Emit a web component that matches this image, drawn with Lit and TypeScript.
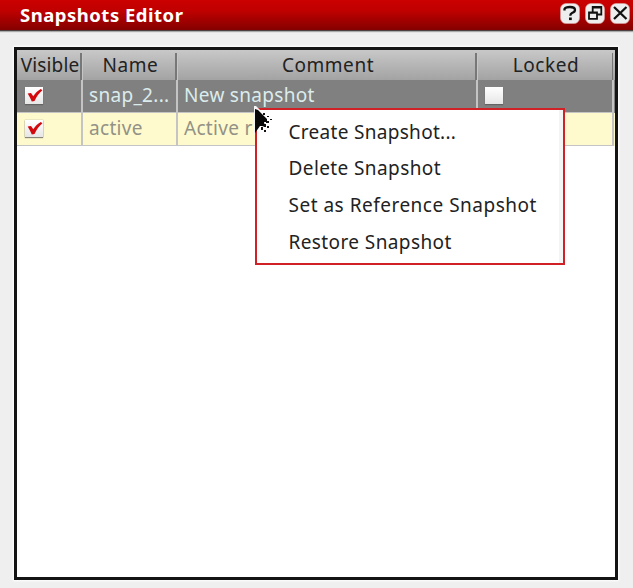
import { LitElement, html, css, svg } from "lit";
import { customElement, property } from "lit/decorators.js";

@customElement("check-box")
class CheckBox extends LitElement {
  @property({ type: Boolean }) checked = false;
  static styles = css`
    :host { display: block; width: 18px; height: 18px; }
    .box { width: 18px; height: 17px; background: linear-gradient(#fff, #e6e6e6); box-shadow: 0 1px 1px #555555aa, 0 0 1px #888; }
    svg { display: block; overflow: visible; }
  `;
  render() {
    return html`<div class="box">
      <svg width="18" height="17" viewBox="0 0 18 17">
        ${this.checked
          ? svg`<path d="M2.7 6.4 L6 5.9 L8.3 9.2 C10.4 6.1 12.6 3.8 15.8 2 L17.4 3.3 C13.6 6.4 11.5 9.8 9.5 14 L6.8 14.6 C5.6 11.7 4.4 9 2.7 6.4Z" fill="#d3080d"/>`
          : null}
      </svg>
    </div>`;
  }
}

interface Snapshot { name: string; comment: string; selected: boolean; }

@customElement("app-root")
class AppRoot extends LitElement {
  static styles = css`
    :host {
      display: flex; flex-direction: column; position: relative; box-sizing: border-box;
      width: 633px; height: 588px; background: #efefef; overflow: hidden;
      font-family: "Noto Sans", sans-serif; font-size: 19px; color: #222; white-space: nowrap;
    }
    .titlebar {
      box-sizing: border-box; height: 31px; flex: none; display: flex; align-items: center;
      padding: 0 3px 0 20px; color: #fff; font-weight: 700; font-size: 18.5px;
      background: linear-gradient(#cb0000, #c00000 35%, #850000);
      border-bottom: 1px solid #4c4141; box-shadow: 0 1px 1px #aaa;
    }
    .title { flex: 1; letter-spacing: 0.5px; line-height: 30px; }
    .buttons { display: flex; gap: 5px; margin-top: -3px; }
    .buttons svg { display: block; }
    .frame {
      margin: 16px 15px 8px 14px; flex: 1; box-sizing: border-box;
      border: 3px solid #141414; background: #fff; box-shadow: 0 0 2px 1px #fff;
    }
    .row { display: grid; grid-template-columns: 66px 95px 300px 136px; }
    .head { height: 30px; background: linear-gradient(#c8c8c8, #a3a3a3); }
    .head .cell {
      margin-top: 3px; line-height: 25px; text-align: center; letter-spacing: 0.55px;
      background: linear-gradient(90deg, #777 1.5px, #c6c6c6 1.5px) right / 3px 100% no-repeat;
    }
    .head .cell:first-child { letter-spacing: 0.15px; }
    .head .cell:last-child { background: linear-gradient(#777, #777) right 1px top / 1px 100% no-repeat; }
    .item { height: 33px; }
    .item .cell { box-sizing: border-box; border-right: 2px solid #c4c4c4; border-bottom: 1px solid #c4c4c4;
      padding-left: 6px; line-height: 30px; letter-spacing: 0.3px; overflow: hidden; }
    .item .cell + .cell { padding-left: 6px; }
    .item .cell.check { padding: 7px 0 0 8px; }
    .item .cell.check:last-child { padding-left: 7px; }
    .selected { background: #808080; color: #dcecec; }
    .reference { background: #fffacd; color: #929287; }
    .menu {
      position: absolute; left: 255px; top: 108px; width: 310px; height: 157px; box-sizing: border-box;
      border: 2px solid #d02226; background: #fff; padding: 3.5px 5px 4px 31.5px; box-shadow: inset -4px 0 #f3f5f5;
    }
    .option { height: 36.7px; line-height: 36px; letter-spacing: 0.4px; }
    .option:nth-child(3) { letter-spacing: 0.5px; }
    .option:first-child { letter-spacing: 0.3px; }
    .pointer { position: absolute; left: 253px; top: 104px; }
  `;

  private snapshots: Snapshot[] = [
    { name: "snap_2...", comment: "New snapshot", selected: true },
    { name: "active", comment: "Active r", selected: false },
  ];

  private button(glyph: unknown) {
    return html`<svg width="20" height="21" viewBox="0 0 20 21">
      <rect x=".5" y=".5" width="19" height="20" rx="5.5" fill="#eee" stroke="#d9a5a5" stroke-width=".6"/>${glyph}
    </svg>`;
  }

  render() {
    return html`
      <div class="titlebar">
        <span class="title">Snapshots Editor</span>
        <div class="buttons">
          ${this.button(svg`<path d="M4.5 7.5V6Q5.5 4 10 4Q15 4 15 7Q15 9 12 10Q10.3 10.8 10.3 12.7" fill="none" stroke="#111" stroke-width="2.3"/><rect x="9" y="14.5" width="2.8" height="2.6" fill="#111"/>`)}
          ${this.button(svg`<path d="M7.7 8.5V4H16.3V11.5H12.5M7.7 4.6H16.3M4 9.3H12V15.8H4ZM4 9.9H12" fill="none" stroke="#111" stroke-width="1.8"/>`)}
          ${this.button(svg`<path d="M4 4L16.5 16M16.5 4L4 16" fill="none" stroke="#111" stroke-width="2.3"/>`)}
        </div>
      </div>
      <div class="frame">
        <div class="row head">
          ${["Visible", "Name", "Comment", "Locked"].map((t) => html`<div class="cell">${t}</div>`)}
        </div>
        ${this.snapshots.map((s) => html`
          <div class="row item ${s.selected ? "selected" : "reference"}">
            <div class="cell check"><check-box checked></check-box></div>
            <div class="cell">${s.name}</div>
            <div class="cell">${s.comment}</div>
            <div class="cell check">${s.selected ? html`<check-box></check-box>` : null}</div>
          </div>`)}
      </div>
      <div class="menu">
        ${["Create Snapshot...", "Delete Snapshot", "Set as Reference Snapshot", "Restore Snapshot"].map(
          (t) => html`<div class="option">${t}</div>`)}
      </div>
      <svg class="pointer" width="20" height="34" viewBox="0 0 20 34">
        <path d="M1 2H3L7 6H2V30H1Z" fill="#f5f5f5"/>
        <path d="M2 5L5 6L14 15V18H11L12 23L9 22L7 22L2 29Z" fill="#080808"/>
        <path d="M10 9h2v2h-2zM14 12h2v1h-2zM17 15h2v1h-2zM13 17h3v2h-3zM11 20h2v3h-2zM14 22h2v2h-2zM8 23h2v3h-2zM11 26h2v2h-2z" fill="#111"/>
      </svg>
    `;
  }
}
